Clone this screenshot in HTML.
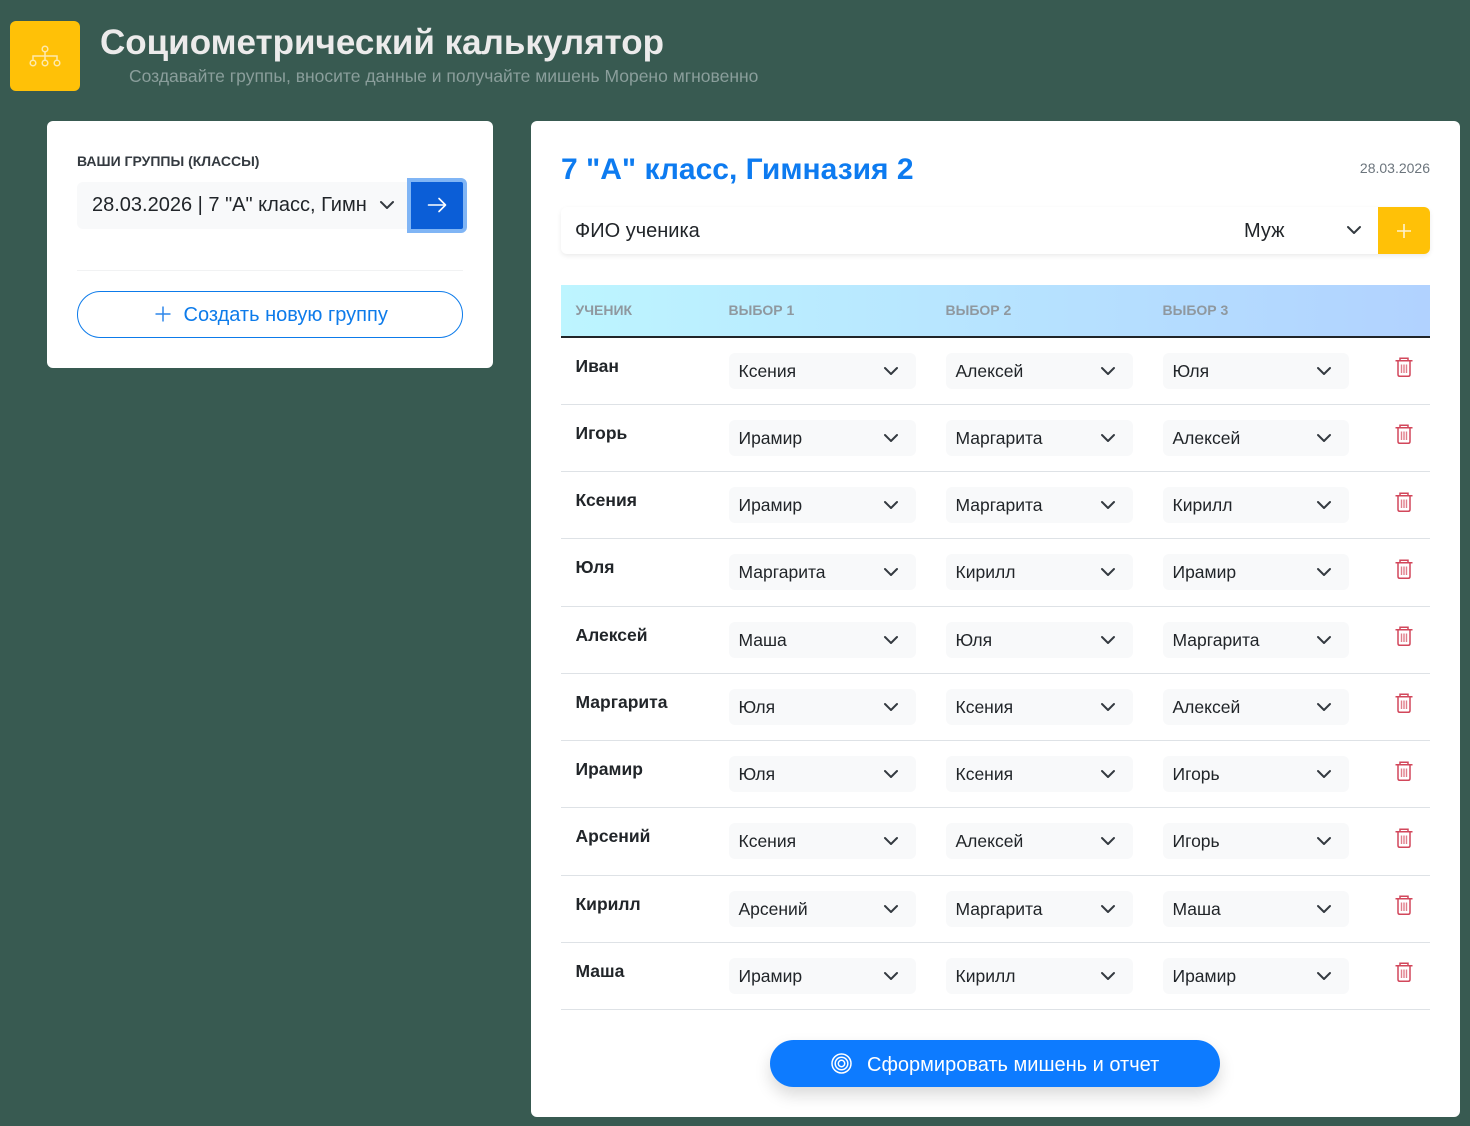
<!DOCTYPE html>
<html lang="ru"><head><meta charset="utf-8"><title>Социометрический калькулятор</title>
<style>
*{box-sizing:border-box;margin:0;padding:0}
html,body{width:1470px;height:1126px;overflow:hidden}
body{background:#385a51;font-family:"Liberation Sans",sans-serif;color:#212529;position:relative}
.a{position:absolute;white-space:nowrap}
.card{position:absolute;background:#fff;border-radius:6px}
.sel{position:absolute;width:187px;height:36px;top:15px;background:#f8f9fa;border-radius:6px;font-size:17.5px;line-height:36px;padding-left:9.500px;white-space:nowrap;color:#212529}
.sel svg{position:absolute;right:17px;top:10px}
.c1{left:168px}.c2{left:385px;}.c3{left:602px;width:186px}
.row{position:absolute;left:0;width:869px;height:67.2px;border-bottom:1px solid #dee2e6}
.name{position:absolute;left:14.500px;top:17px;font-weight:700;font-size:17.5px;line-height:22px;color:#212529}
.trash{position:absolute;left:833.500px;top:19.200px}
.th{position:absolute;top:17px;font-size:14px;font-weight:700;line-height:16px;color:#8f989f}
</style></head><body>
<svg width="0" height="0" style="position:absolute"><defs>
<symbol id="ch" viewBox="0 0 16 16"><path d="M2 5l6 6 6-6" fill="none" stroke="#343a40" stroke-width="2" stroke-linecap="round" stroke-linejoin="round"/></symbol>
<symbol id="tr" viewBox="0 0 18 20"><path d="M.5 3.800h17M5 3.500V1.200h8v2.300M3 4.500v13q0 1.800 1.800 1.800h8.400q1.800 0 1.800-1.800v-13" fill="none" stroke="#d2475b" stroke-width="1.500"/><path d="M6.500 7.500v8.500M9 7.500v8.500M11.500 7.500v8.500" fill="none" stroke="#e07f8c" stroke-width="1.400"/></symbol>
</defs></svg>

<div class="a" style="left:10px;top:21px;width:70px;height:70px;background:#ffc107;border-radius:6px"></div>
<svg class="a" style="left:29px;top:43px" width="32" height="26" viewBox="0 0 32 26" fill="none" stroke="#fde9ad" stroke-width="1.500"><circle cx="16" cy="6" r="2.800"/><circle cx="4" cy="20" r="2.800"/><circle cx="16" cy="20" r="2.800"/><circle cx="28" cy="20" r="2.800"/><path d="M16 9v8M4 16.500v-3.500h24v3.500"/></svg>
<div class="a" style="left:100px;top:22px;font-size:35px;font-weight:700;line-height:42px;color:#ecebeb">Социометрический калькулятор</div>
<div class="a" style="left:129px;top:66px;font-size:17.5px;line-height:20px;color:#8a9e9b">Создавайте группы, вносите данные и получайте мишень Морено мгновенно</div>

<div class="card" style="left:47px;top:121px;width:446px;height:247px">
  <div class="a" style="left:30px;top:32px;font-size:14px;font-weight:700;line-height:16px;color:#343a40">ВАШИ ГРУППЫ (КЛАССЫ)</div>
  <div class="a" style="left:30px;top:61px;width:335px;height:47px;background:#f8f9fa;border-radius:6px 0 0 6px;font-size:20px;line-height:47px;padding-left:15px;color:#212529">28.03.2026 | 7 "А" класс, Гимн<svg style="position:absolute;left:302px;top:15px" width="16" height="16"><use href="#ch"/></svg></div>
  <div class="a" style="left:360px;top:57px;width:60px;height:55px;background:#0b5ed7;border:4px solid #80b5f5;border-radius:0 6px 6px 0"></div>
  <svg class="a" style="left:380px;top:74px" width="20" height="20" viewBox="0 0 20 20" fill="none" stroke="#fff" stroke-width="1.600" stroke-linecap="round" stroke-linejoin="round"><path d="M1.500 10h17M12 3.500l6.500 6.500-6.500 6.500"/></svg>
  <div class="a" style="left:30px;top:149px;width:386px;height:1px;background:#f1f2f3"></div>
  <div class="a" style="left:30px;top:170px;width:386px;height:47px;border:1px solid #0d7bea;border-radius:24px"></div>
  <svg class="a" style="left:108px;top:185px" width="16" height="16" viewBox="0 0 16 16" fill="none" stroke="#2d86ea" stroke-width="1.500"><path d="M8 .5v15M.5 8h15"/></svg>
  <div class="a" style="left:136.500px;top:182px;font-size:20px;line-height:24px;color:#0d7bea">Создать новую группу</div>
</div>

<div class="card" style="left:531px;top:121px;width:929px;height:996px">
  <div class="a" style="left:30px;top:30px;font-size:30px;font-weight:700;line-height:38px;color:#0d7bf0">7 "А" класс, Гимназия 2</div>
  <div class="a" style="right:30px;top:38px;font-size:14px;line-height:18px;color:#6c757d">28.03.2026</div>
  <div class="a" style="left:30px;top:86px;width:869px;height:47px;border-radius:6px;box-shadow:0 2px 5px rgba(0,0,0,.08)"></div>
  <div class="a" style="left:44px;top:98px;font-size:20px;line-height:24px;color:#212529">ФИО ученика</div>
  <div class="a" style="left:713px;top:98px;font-size:20px;line-height:24px;color:#212529">Муж</div>
  <svg class="a" style="left:815px;top:101px" width="16" height="16"><use href="#ch"/></svg>
  <div class="a" style="left:847px;top:86px;width:52px;height:47px;background:#ffc107;border-radius:0 6px 6px 0"></div>
  <svg class="a" style="left:865px;top:102px" width="16" height="16" viewBox="0 0 16 16" fill="none" stroke="#fdf3d0" stroke-width="1.600"><path d="M8 1v14M1 8h14"/></svg>

  <div class="a" style="left:30px;top:164px;width:869px;height:53px;background:linear-gradient(90deg,#bdf5ff,#b1d2ff);border-bottom:2px solid #212529">
    <div class="th" style="left:14.500px">УЧЕНИК</div><div class="th" style="left:167.500px">ВЫБОР 1</div><div class="th" style="left:384.500px">ВЫБОР 2</div><div class="th" style="left:601.500px">ВЫБОР 3</div>
  </div>

  <div class="a" style="left:30px;top:217px;width:869px;height:672px">
  <div class="row" style="top:0"><div class="name">Иван</div><div class="sel c1">Ксения<svg width="16" height="16"><use href="#ch"/></svg></div><div class="sel c2">Алексей<svg width="16" height="16"><use href="#ch"/></svg></div><div class="sel c3">Юля<svg width="16" height="16"><use href="#ch"/></svg></div><svg class="trash" width="18" height="20"><use href="#tr"/></svg></div>
  <div class="row" style="top:67.200px"><div class="name">Игорь</div><div class="sel c1">Ирамир<svg width="16" height="16"><use href="#ch"/></svg></div><div class="sel c2">Маргарита<svg width="16" height="16"><use href="#ch"/></svg></div><div class="sel c3">Алексей<svg width="16" height="16"><use href="#ch"/></svg></div><svg class="trash" width="18" height="20"><use href="#tr"/></svg></div>
  <div class="row" style="top:134.400px;height:66.600px"><div class="name">Ксения</div><div class="sel c1">Ирамир<svg width="16" height="16"><use href="#ch"/></svg></div><div class="sel c2">Маргарита<svg width="16" height="16"><use href="#ch"/></svg></div><div class="sel c3">Кирилл<svg width="16" height="16"><use href="#ch"/></svg></div><svg class="trash" width="18" height="20"><use href="#tr"/></svg></div>
  <div class="row" style="top:201px;height:68px"><div class="name">Юля</div><div class="sel c1">Маргарита<svg width="16" height="16"><use href="#ch"/></svg></div><div class="sel c2">Кирилл<svg width="16" height="16"><use href="#ch"/></svg></div><div class="sel c3">Ирамир<svg width="16" height="16"><use href="#ch"/></svg></div><svg class="trash" style="top:20px" width="18" height="20"><use href="#tr"/></svg></div>
  <div class="row" style="top:268.800px"><div class="name">Алексей</div><div class="sel c1">Маша<svg width="16" height="16"><use href="#ch"/></svg></div><div class="sel c2">Юля<svg width="16" height="16"><use href="#ch"/></svg></div><div class="sel c3">Маргарита<svg width="16" height="16"><use href="#ch"/></svg></div><svg class="trash" width="18" height="20"><use href="#tr"/></svg></div>
  <div class="row" style="top:336px"><div class="name">Маргарита</div><div class="sel c1">Юля<svg width="16" height="16"><use href="#ch"/></svg></div><div class="sel c2">Ксения<svg width="16" height="16"><use href="#ch"/></svg></div><div class="sel c3">Алексей<svg width="16" height="16"><use href="#ch"/></svg></div><svg class="trash" width="18" height="20"><use href="#tr"/></svg></div>
  <div class="row" style="top:403.200px"><div class="name">Ирамир</div><div class="sel c1">Юля<svg width="16" height="16"><use href="#ch"/></svg></div><div class="sel c2">Ксения<svg width="16" height="16"><use href="#ch"/></svg></div><div class="sel c3">Игорь<svg width="16" height="16"><use href="#ch"/></svg></div><svg class="trash" style="top:19.600px" width="18" height="20"><use href="#tr"/></svg></div>
  <div class="row" style="top:470.400px"><div class="name">Арсений</div><div class="sel c1">Ксения<svg width="16" height="16"><use href="#ch"/></svg></div><div class="sel c2">Алексей<svg width="16" height="16"><use href="#ch"/></svg></div><div class="sel c3">Игорь<svg width="16" height="16"><use href="#ch"/></svg></div><svg class="trash" width="18" height="20"><use href="#tr"/></svg></div>
  <div class="row" style="top:537.600px"><div class="name">Кирилл</div><div class="sel c1">Арсений<svg width="16" height="16"><use href="#ch"/></svg></div><div class="sel c2">Маргарита<svg width="16" height="16"><use href="#ch"/></svg></div><div class="sel c3">Маша<svg width="16" height="16"><use href="#ch"/></svg></div><svg class="trash" width="18" height="20"><use href="#tr"/></svg></div>
  <div class="row" style="top:604.800px"><div class="name">Маша</div><div class="sel c1">Ирамир<svg width="16" height="16"><use href="#ch"/></svg></div><div class="sel c2">Кирилл<svg width="16" height="16"><use href="#ch"/></svg></div><div class="sel c3">Ирамир<svg width="16" height="16"><use href="#ch"/></svg></div><svg class="trash" width="18" height="20"><use href="#tr"/></svg></div>
  </div>

  <div class="a" style="left:239px;top:919px;width:450px;height:47px;background:#0d7bff;border-radius:24px;box-shadow:0 8px 16px rgba(0,0,0,.15)"></div>
  <svg class="a" style="left:300px;top:932px" width="21" height="21" viewBox="0 0 21 21" fill="none" stroke="#fff" stroke-width="1.500"><circle cx="10.500" cy="10.500" r="9.500"/><circle cx="10.500" cy="10.500" r="6.300"/><circle cx="10.500" cy="10.500" r="3.200"/></svg>
  <div class="a" style="left:336px;top:932px;font-size:20px;line-height:24px;color:#fff">Сформировать мишень и отчет</div>
</div>
</body></html>
